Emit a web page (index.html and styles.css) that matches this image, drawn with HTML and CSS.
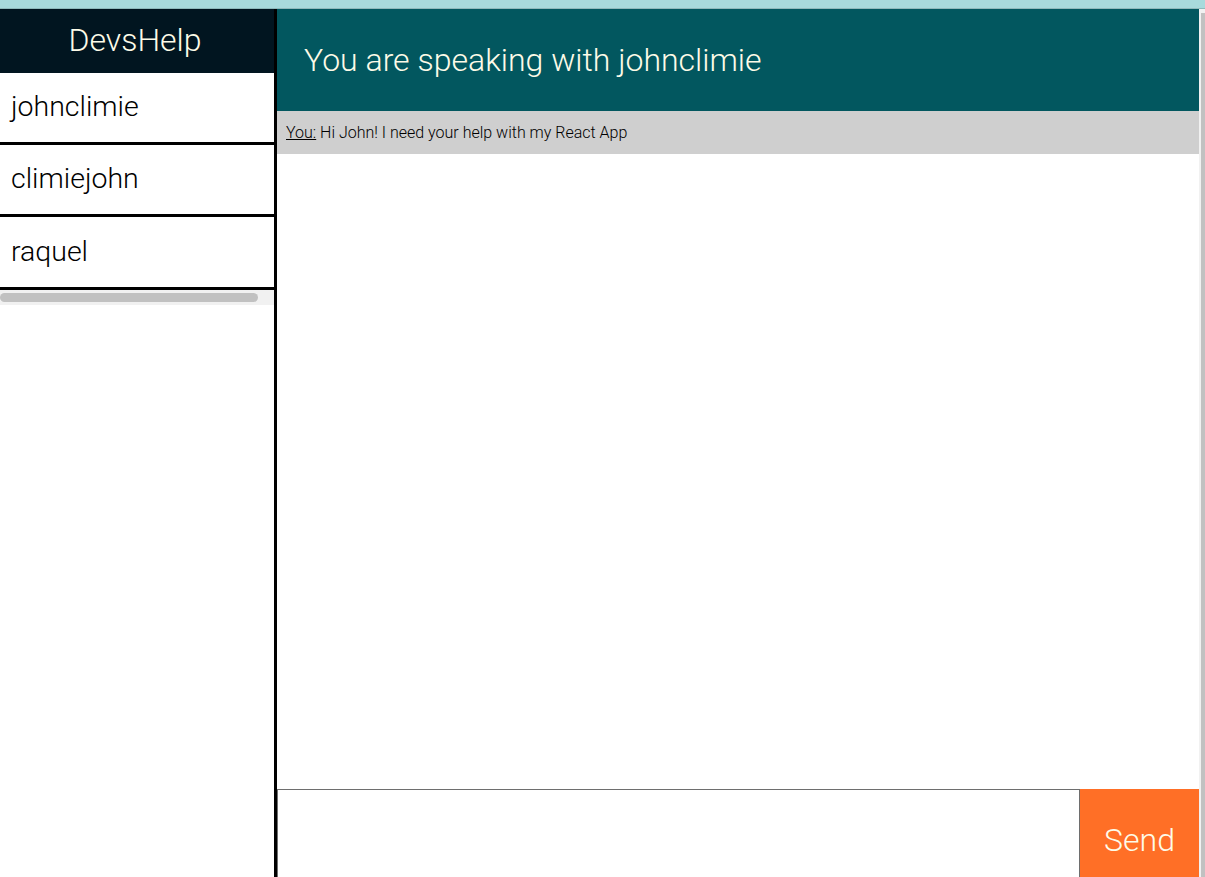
FILE: index.html
```html
<!DOCTYPE html>
<html>
<head>
<meta charset="utf-8">
<link rel="stylesheet" href="styles.css">
</head>
<body>
<div class="topstrip"></div>
<div class="app">
  <aside class="sidebar">
    <div class="brand">DevsHelp</div>
    <ul class="users">
      <li class="user">johnclimie</li>
      <li class="user">climiejohn</li>
      <li class="user user-last">raquel</li>
    </ul>
    <div class="hscroll"><div class="hthumb"></div></div>
  </aside>
  <main class="chat">
    <header class="chat-head">You are speaking with johnclimie</header>
    <div class="messages">
      <div class="msg"><span class="who">You:</span> Hi John! I need your help with my React App</div>
    </div>
    <form class="composer">
      <input class="input" type="text">
      <button class="send" type="button">Send</button>
    </form>
  </main>
  <div class="vscroll"><div class="vthumb"></div></div>
</div>
</body>
</html>
```
FILE: styles.css
```css
html, body {
  margin: 0;
  padding: 0;
  height: 100%;
  overflow: hidden;
}
body {
  font-family: Roboto, "Liberation Sans", sans-serif;
  background: #ffffff;
  display: flex;
  flex-direction: column;
}
.topstrip {
  height: 8px;
  background: #a8dadc;
  border-bottom: 1px solid #8fb9bb;
  flex: none;
}
.app {
  flex: 1;
  display: flex;
  min-height: 0;
}
.sidebar {
  width: 274px;
  border-right: 3px solid #000;
  display: flex;
  flex-direction: column;
  flex: none;
}
.brand {
  height: 64px;
  background: #011520;
  color: #fdfbe8;
  font-size: 32px;
  font-weight: 300;
  display: flex;
  align-items: center;
  justify-content: center;
  padding-bottom: 2px;
  padding-right: 4px;
  box-sizing: border-box;
}
.users {
  list-style: none;
  margin: 0;
  padding: 0;
}
.user {
  height: 67px;
  padding-bottom: 2px;
  border-bottom: 3px solid #000;
  font-size: 28.5px;
  font-weight: 300;
  color: #000;
  padding-left: 11px;
  display: flex;
  align-items: center;
}
.user-last {
  height: 68px;
}
.hscroll {
  height: 15px;
  background: #f1f1f1;
  padding: 3px 16px 0 0;
  box-sizing: border-box;
}
.hthumb {
  width: 258px;
  height: 9px;
  background: #c1c1c1;
  border-radius: 5px;
}
.chat {
  flex: 1;
  display: flex;
  flex-direction: column;
  min-width: 0;
}
.chat-head {
  height: 102px;
  background: #02575f;
  color: #fdfbe8;
  font-size: 32px;
  font-weight: 300;
  display: flex;
  align-items: center;
  padding-left: 27px;
  box-sizing: border-box;
  flex: none;
}
.messages {
  flex: 1;
}
.msg {
  background: #cfcfcf;
  height: 43px;
  padding-left: 9px;
  font-size: 16px;
  font-weight: 300;
  color: #000;
  display: flex;
  align-items: center;
  white-space: pre;
}
.who {
  text-decoration: underline;
}
.composer {
  height: 88px;
  display: flex;
  margin: 0;
  flex: none;
}
.input {
  flex: 1;
  margin: 0;
  border: 1px solid #6e6e6e;
  border-bottom: none;
  padding: 0;
  outline: none;
  background: #fff;
}
.send {
  width: 119px;
  background: #ff6f26;
  color: #fdfbe8;
  border: none;
  font-family: Roboto, "Liberation Sans", sans-serif;
  font-size: 32px;
  font-weight: 300;
  padding: 14px 0 0;
  margin: 0;
}
.vscroll {
  width: 6px;
  background: #f1f1f1;
  flex: none;
  padding-top: 4px;
  padding-left: 2px;
  box-sizing: border-box;
}
.vthumb {
  height: 100%;
  background: #c1c1c1;
}
```
